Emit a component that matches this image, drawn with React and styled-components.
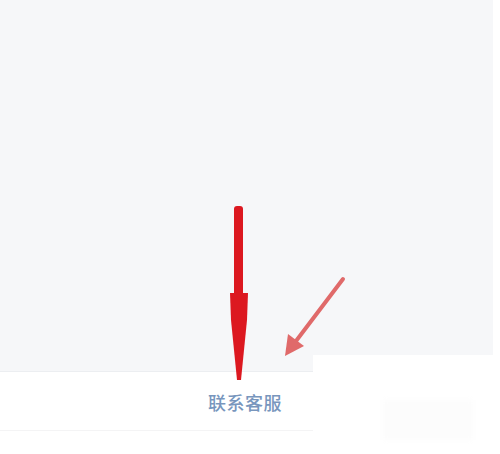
import styled, { createGlobalStyle } from "styled-components";

const GlobalStyle = createGlobalStyle`
  html, body {
    margin: 0;
    padding: 0;
    background: #ffffff;
  }
  body {
    font-family: "Noto Sans CJK SC", "Noto Sans", sans-serif;
  }
`;

const Page = styled.div`
  position: relative;
  width: 500px;
  height: 454px;
  overflow: hidden;
  display: flex;
  flex-direction: column;
  background: #ffffff;
`;

const Content = styled.main`
  height: 372px;
  width: 493px;
  background: #f6f7f9;
  border-bottom: 1px solid #eceef1;
  box-sizing: border-box;
`;

const Footer = styled.footer`
  flex: 1;
  display: flex;
  flex-direction: column;
  align-items: center;
  width: 490px;
`;

const ServiceLink = styled.a`
  margin-top: 18px;
  font-size: 18px;
  font-weight: 500;
  line-height: 24px;
  letter-spacing: 0.5px;
  color: #7896bd;
  cursor: pointer;
`;

const Divider = styled.div`
  margin-top: 16px;
  width: 100%;
  height: 1px;
  background: #f4f4f5;
`;

const Patch = styled.div`
  position: absolute;
  left: 313px;
  top: 355px;
  width: 187px;
  height: 99px;
  background: #ffffff;
`;

const Mark = styled.div`
  position: absolute;
  left: 383px;
  top: 400px;
  width: 90px;
  height: 40px;
  background: #fcfcfc;
  filter: blur(2px);
`;

const Overlay = styled.svg`
  position: absolute;
  left: 0;
  top: 0;
  pointer-events: none;
`;

export default function App() {
  return (
    <>
      <GlobalStyle />
      <Page>
        <Content />
        <Footer>
          <ServiceLink>联系客服</ServiceLink>
          <Divider />
        </Footer>
        <Patch />
        <Mark />
        <Overlay width="500" height="454" viewBox="0 0 500 454">
          <rect x="234" y="206" width="9" height="92" rx="3" fill="#dc1820" />
          <path d="M230 293 L248 293 L247 320 L244 350 L241 380 L237 380 L234 350 L231 320 Z" fill="#dc1820" />
          <line x1="343" y1="279" x2="293" y2="345" stroke="#e06a6a" strokeWidth="4" strokeLinecap="round" />
          <path d="M285 356 L288 334 L304 346 Z" fill="#e06a6a" />
        </Overlay>
      </Page>
    </>
  );
}
